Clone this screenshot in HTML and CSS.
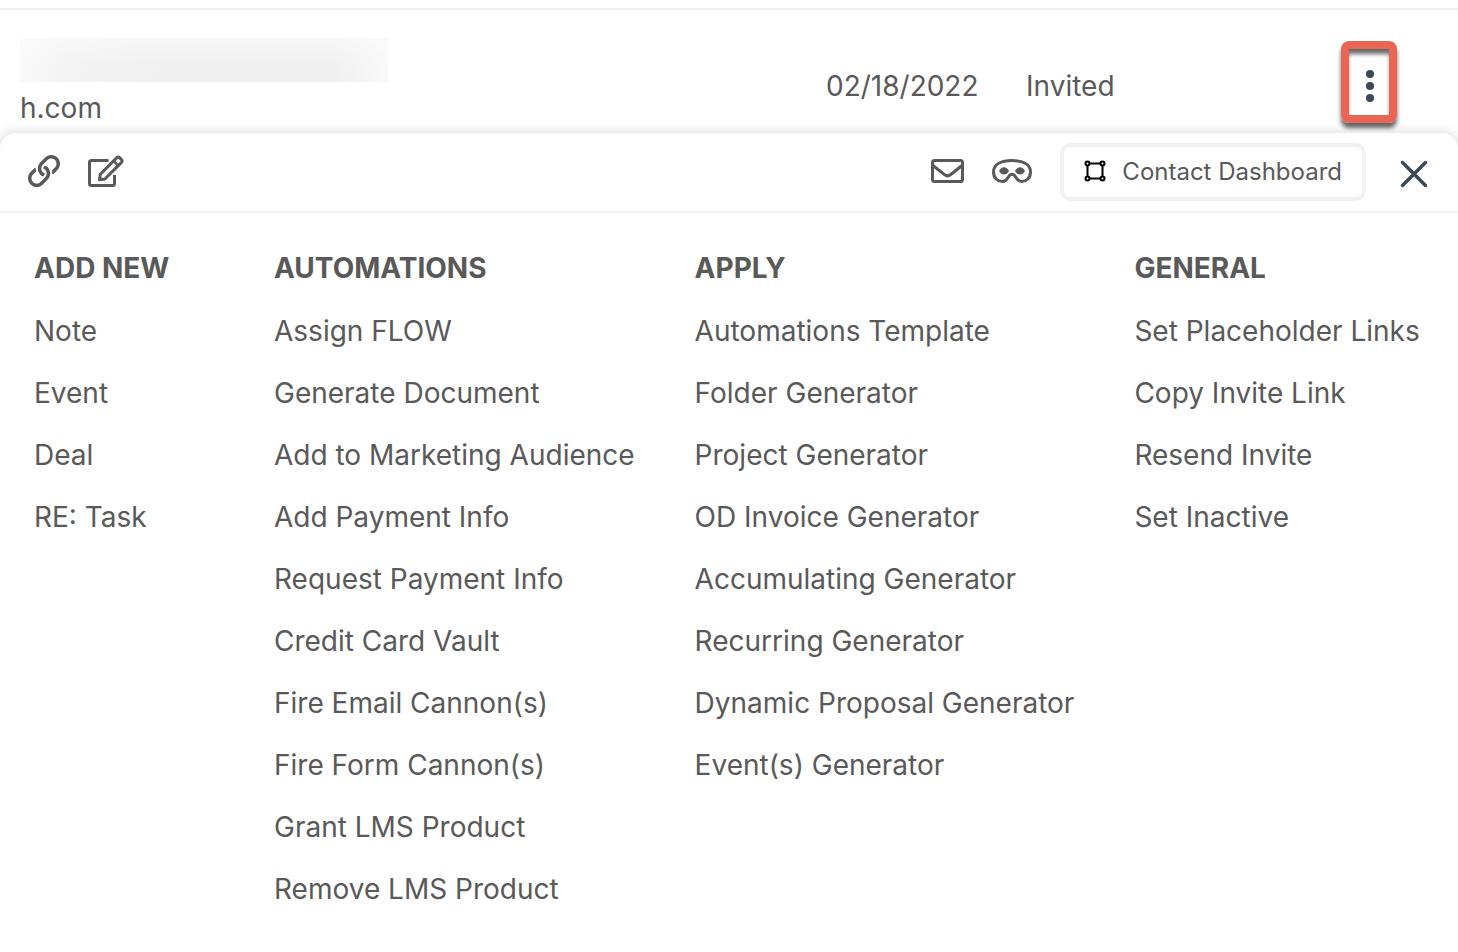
FILE: index.html
```html
<!DOCTYPE html>
<html lang="en">
<head>
  <meta charset="UTF-8">
  <title>Contacts</title>
  <link rel="stylesheet" href="styles.css">
</head>
<body>
  <div class="contact-row">
    <div class="contact-name">
      <div class="redacted"></div>
      <div>h.com</div>
    </div>
    <div class="contact-cell">02/18/2022</div>
    <div class="contact-cell">Invited</div>
    <button class="more-btn" aria-label="More actions">
      <svg width="8" height="32" viewBox="0 0 8 32" fill="currentColor">
        <circle cx="4" cy="4" r="4"/><circle cx="4" cy="16" r="4"/><circle cx="4" cy="28" r="4"/>
      </svg>
    </button>
  </div>

  <div class="panel">
    <div class="toolbar">
      <button class="icon-btn" aria-label="Copy link">
        <svg width="32" height="32" viewBox="0 0 512 512" fill="currentColor">
          <path d="M314.222 197.78c51.091 51.091 54.377 132.287 9.75 187.16-6.242 7.73-2.784 3.865-84.94 86.02-54.696 54.696-143.266 54.745-197.99 0-54.711-54.69-54.734-143.255 0-197.99 32.773-32.773 51.835-51.899 63.409-63.457 7.463-7.452 20.331-2.354 20.486 8.192a173.31 173.31 0 0 0 4.746 37.828c.966 4.029-.272 8.269-3.202 11.198L80.632 312.57c-32.755 32.775-32.887 85.892 0 118.8 32.775 32.755 85.892 32.887 118.8 0l75.19-75.2c32.718-32.725 32.777-86.013 0-118.79a83.722 83.722 0 0 0-22.814-16.229c-4.623-2.233-7.182-7.25-6.561-12.346 1.356-11.122 6.296-21.885 14.815-30.405l4.375-4.375c3.625-3.626 9.177-4.594 13.76-2.294 12.999 6.524 25.187 15.211 36.025 26.049z"/>
          <path d="M470.958 41.04c-54.724-54.745-143.294-54.696-197.99 0-82.156 82.156-78.698 78.29-84.94 86.02-44.627 54.873-41.341 136.069 9.75 187.16 10.838 10.838 23.026 19.525 36.025 26.049 4.582 2.3 10.134 1.331 13.76-2.294l4.375-4.375c8.52-8.519 13.459-19.283 14.815-30.405.621-5.096-1.938-10.113-6.561-12.346a83.706 83.706 0 0 1-22.814-16.229c-32.777-32.777-32.718-86.065 0-118.79l75.19-75.2c32.908-32.887 86.025-32.755 118.8 0 32.887 32.908 32.755 86.025 0 118.8l-45.848 45.84c-2.93 2.929-4.168 7.169-3.202 11.198a173.31 173.31 0 0 1 4.746 37.828c.155 10.546 13.023 15.644 20.486 8.192 11.574-11.558 30.636-30.684 63.409-63.457 54.733-54.735 54.71-143.3-.001-197.991z"/>
        </svg>
      </button>
      <button class="icon-btn" aria-label="Edit">
        <svg width="36" height="32" viewBox="0 0 36 32" fill="none" stroke="currentColor" stroke-width="3" stroke-linejoin="round">
          <path d="M20.5 5.5H3.500Q1.500 5.500 1.500 7.500V28.500Q1.500 30.500 3.500 30.500H24.500Q26.500 30.500 26.500 28.500V20"/>
          <path d="M11.500 24.700L12.300 19.300L28.600 2.900Q30.200 1.300 31.800 2.900L33.300 4.400Q34.900 6 33.300 7.600L16.900 24L11.500 24.700Z"/>
          <path d="M25.600 6L30.200 10.600" stroke-width="2.500"/>
        </svg>
      </button>
      <div class="spacer"></div>
      <button class="icon-btn" aria-label="Send email">
        <svg width="33" height="32" viewBox="0 0 33 32" fill="none" stroke="currentColor" stroke-width="3">
          <rect x="1.500" y="5.500" width="30" height="21" rx="2"/>
          <path d="M2 10.500L13.500 19.700Q16.500 22 19.500 19.700L31 10.500"/>
        </svg>
      </button>
      <button class="icon-btn" aria-label="Log in as contact">
        <svg width="40" height="32" viewBox="0 0 40 32">
          <path d="M20 5.500C30.500 5.500 38.500 9 38.500 17C38.500 23 34.500 26.500 29.500 26.500C26.500 26.500 25.300 25 23.800 22.300C22.600 20 21.600 19.200 20 19.200C18.400 19.200 17.400 20 16.200 22.300C14.700 25 13.500 26.500 10.500 26.500C5.500 26.500 1.500 23 1.500 17C1.500 9 9.500 5.500 20 5.500Z" fill="none" stroke="currentColor" stroke-width="3"/>
          <path d="M7 16Q9 12.300 12 12.300T17 16Q15 19.500 12 19.500T7 16ZM23 16Q25 12.300 28 12.300T33 16Q31 19.500 28 19.500T23 16Z" fill="currentColor"/>
        </svg>
      </button>
      <button class="dashboard-btn">
        <svg width="22" height="22" viewBox="0 0 22 22" fill="none" stroke="#000" stroke-width="2">
          <path d="M5 3.500H17M5 18.500H17M3.500 5V17M18.500 5V17"/>
          <circle cx="3.500" cy="3.500" r="2"/><circle cx="18.500" cy="3.500" r="2"/>
          <circle cx="3.500" cy="18.500" r="2"/><circle cx="18.500" cy="18.500" r="2"/>
        </svg>
        Contact Dashboard
      </button>
      <button class="close-btn" aria-label="Close">
        <svg width="28" height="28" viewBox="0 0 28 28" fill="none" stroke="currentColor" stroke-width="3.500" stroke-linecap="round">
          <path d="M2.500 2.500L25.500 25.500M25.500 2.500L2.500 25.500"/>
        </svg>
      </button>
    </div>

    <div class="menu">
      <div class="menu-col add-new">
        <h2>ADD NEW</h2>
        <a href="#">Note</a>
        <a href="#">Event</a>
        <a href="#">Deal</a>
        <a href="#">RE: Task</a>
      </div>
      <div class="menu-col">
        <h2>AUTOMATIONS</h2>
        <a href="#">Assign FLOW</a>
        <a href="#">Generate Document</a>
        <a href="#">Add to Marketing Audience</a>
        <a href="#">Add Payment Info</a>
        <a href="#">Request Payment Info</a>
        <a href="#">Credit Card Vault</a>
        <a href="#">Fire Email Cannon(s)</a>
        <a href="#">Fire Form Cannon(s)</a>
        <a href="#">Grant LMS Product</a>
        <a href="#">Remove LMS Product</a>
      </div>
      <div class="menu-col">
        <h2>APPLY</h2>
        <a href="#">Automations Template</a>
        <a href="#">Folder Generator</a>
        <a href="#">Project Generator</a>
        <a href="#">OD Invoice Generator</a>
        <a href="#">Accumulating Generator</a>
        <a href="#">Recurring Generator</a>
        <a href="#">Dynamic Proposal Generator</a>
        <a href="#">Event(s) Generator</a>
      </div>
      <div class="menu-col">
        <h2>GENERAL</h2>
        <a href="#">Set Placeholder Links</a>
        <a href="#">Copy Invite Link</a>
        <a href="#">Resend Invite</a>
        <a href="#">Set Inactive</a>
      </div>
    </div>
  </div>
</body>
</html>
```
FILE: styles.css
```css
* {
  box-sizing: border-box;
}
body {
  margin: 0;
  padding-top: 8px;
  background: #fff;
  color: #595959;
  font-family: Inter, sans-serif;
  font-size: 28px;
  line-height: 34px;
}
button {
  padding: 0;
  border: none;
  background: none;
  color: inherit;
  font-family: inherit;
  cursor: pointer;
}
svg {
  display: block;
}

/* contact row */
.contact-row {
  display: grid;
  grid-template-columns: 1fr 200px 315px 97px;
  align-items: center;
  padding: 28px 20px 8px;
  border-top: 2px solid #eee;
}
.contact-cell {
  padding-top: 8px;
}
.redacted {
  width: 368px;
  height: 44px;
  margin-bottom: 9px;
  background:
    linear-gradient(rgba(255, 255, 255, 0.4), rgba(255, 255, 255, 0) 70%),
    linear-gradient(90deg, #fafafa, #f3f3f3 12%, #f0f0f0 40%, #f0f0f0 85%, #f9f9f9);
}
.more-btn {
  display: flex;
  align-items: center;
  justify-content: center;
  width: 56px;
  height: 82px;
  padding: 8px 0 0 2px;
  border: 8px solid #eb6555;
  border-radius: 8px;
  color: #3b4859;
  box-shadow: 0 5px 4px rgba(0, 0, 0, 0.6), inset 0 6px 4px -1px rgba(0, 0, 0, 0.6);
}

/* action panel */
.panel {
  position: relative;
  border-radius: 16px 16px 0 0;
  background: #fff;
  box-shadow: 0 0 12px 2px rgba(0, 0, 0, 0.12);
}
.toolbar {
  display: flex;
  align-items: center;
  height: 80px;
  padding: 0 30px 0 28px;
  border-bottom: 2px solid #f1f1f1;
}
.icon-btn {
  margin-right: 28px;
  padding-bottom: 2px;
}
.spacer {
  flex: 1;
}
.dashboard-btn {
  display: flex;
  align-items: center;
  gap: 16px;
  height: 58px;
  margin-right: 34px;
  padding: 0 20px 2px;
  border: 4px solid #f1f1f1;
  border-radius: 10px;
  font-size: 24px;
}
.close-btn {
  padding-top: 4px;
  color: #3b4859;
}

.menu {
  display: flex;
  gap: 60px;
  padding: 38px 34px 28px;
}
.menu-col {
  display: flex;
  flex-direction: column;
  gap: 28px;
  white-space: nowrap;
}
.add-new {
  width: 180px;
}
.menu h2 {
  margin: 0 0 1px;
  font-size: 28px;
  font-weight: 700;
}
.menu a {
  color: inherit;
  text-decoration: none;
}
.menu a:hover {
  color: #3b4859;
}
```
